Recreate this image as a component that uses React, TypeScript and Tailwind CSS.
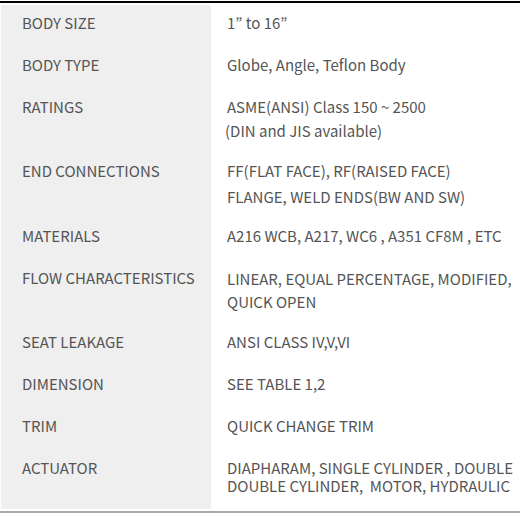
import React from "react";

type Row = {
  label: string;
  lines: string[];
  h: string;
  vpt: string;
  vlh: string;
  indent2?: boolean;
};

const rows: Row[] = [
  { label: "BODY SIZE", lines: ["1” to 16”"], h: "h-[42px]", vpt: "pt-[6px]", vlh: "leading-[24px]" },
  { label: "BODY TYPE", lines: ["Globe, Angle, Teflon Body"], h: "h-[42px]", vpt: "pt-[6px]", vlh: "leading-[24px]" },
  { label: "RATINGS", lines: ["ASME(ANSI) Class 150 ~ 2500", "(DIN and JIS available)"], h: "h-[64px]", vpt: "pt-[6px]", vlh: "leading-[24px]", indent2: true },
  { label: "END CONNECTIONS", lines: ["FF(FLAT FACE), RF(RAISED FACE)", "FLANGE, WELD ENDS(BW AND SW)"], h: "h-[65px]", vpt: "pt-[5px]", vlh: "leading-[26px]" },
  { label: "MATERIALS", lines: ["A216 WCB, A217, WC6 , A351 CF8M , ETC"], h: "h-[42px]", vpt: "pt-[6px]", vlh: "leading-[24px]" },
  { label: "FLOW CHARACTERISTICS", lines: ["LINEAR, EQUAL PERCENTAGE, MODIFIED,", "QUICK OPEN"], h: "h-[64px]", vpt: "pt-[7px]", vlh: "leading-[23px]" },
  { label: "SEAT LEAKAGE", lines: ["ANSI CLASS IV,V,VI"], h: "h-[42px]", vpt: "pt-[6px]", vlh: "leading-[24px]" },
  { label: "DIMENSION", lines: ["SEE TABLE 1,2"], h: "h-[42px]", vpt: "pt-[6px]", vlh: "leading-[24px]" },
  { label: "TRIM", lines: ["QUICK CHANGE TRIM"], h: "h-[42px]", vpt: "pt-[6px]", vlh: "leading-[24px]" },
  { label: "ACTUATOR", lines: ["DIAPHARAM, SINGLE CYLINDER , DOUBLE", "DOUBLE CYLINDER,  MOTOR, HYDRAULIC"], h: "h-[59px]", vpt: "pt-[9px]", vlh: "leading-[18px]" },
];

export default function App() {
  return (
    <div
      className="w-[520px] h-[516px] bg-white text-[#555] text-[15px] tracking-[0px]"
      style={{ fontFamily: '"Noto Sans CJK KR", "Noto Sans", sans-serif' }}
    >
      <div className="pt-px">
        <div className="border-t-2 border-black pt-[2px] border-b-2 border-b-[#aaa] pb-[2px]">
          {rows.map((r) => (
            <div key={r.label} className={`flex ${r.h}`}>
              <div className="ml-px w-[210px] shrink-0 bg-[#efefef] pl-[21px] pt-[6px] leading-[24px]">
                {r.label}
              </div>
              <div className={`flex-1 pl-[16px] whitespace-pre ${r.vpt} ${r.vlh}`}>
                {r.lines.map((l, i) => (
                  <div key={i} className={i === 1 && r.indent2 ? "-ml-[2px]" : ""}>
                    {l}
                  </div>
                ))}
              </div>
            </div>
          ))}
        </div>
      </div>
    </div>
  );
}
